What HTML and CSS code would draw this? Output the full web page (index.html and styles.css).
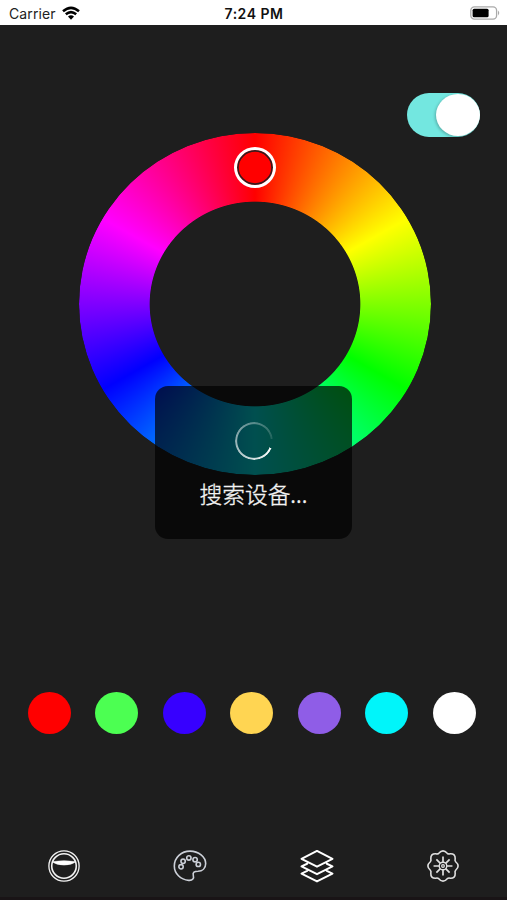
FILE: index.html
```html
<!DOCTYPE html>
<html lang="zh-CN">
<head>
<meta charset="utf-8">
<meta name="viewport" content="width=device-width, initial-scale=1">
<title>Light</title>
<link rel="stylesheet" href="styles.css">
</head>
<body>
<div class="app">
  <header class="status">
    <div class="carrier"><span>Carrier</span>
      <svg class="wifi" width="18" height="14" viewBox="0 0 18 14" fill="none" stroke="#000" stroke-width="2.5"><path d="M1 5.3Q9-1.6 17 5.3M3.8 8.3Q9 3.9 14.2 8.3"/><path d="M6 10.4Q9 8 12 10.4L9 13.7Z" fill="#000" stroke="none"/></svg>
    </div>
    <span class="time">7:24 PM</span>
    <svg class="battery" width="31" height="14" viewBox="0 0 31 14"><rect x=".8" y=".8" width="25.8" height="12.3" rx="3.6" fill="#fff" stroke="#aaa" stroke-width="1.3"/><rect x="2.6" y="2.7" width="16" height="8.6" rx="1.5"/><path d="M28 4.6Q30.5 7 28 9.4Z" fill="#aaa"/></svg>
  </header>
  <main class="main">
    <div class="toggle"><div class="knob"></div></div>
    <div class="wheel">
      <div class="disc"></div>
      <div class="picker"></div>
    </div>
    <div class="swatches">
      <span class="swatch red"></span><span class="swatch green"></span><span class="swatch blue"></span><span class="swatch yellow"></span><span class="swatch purple"></span><span class="swatch cyan"></span><span class="swatch white"></span>
    </div>
  </main>
  <nav class="tabs">
    <svg viewBox="0 0 36 36" fill="none" stroke="#f2f2f2"><circle cx="18" cy="18" r="16" stroke-width="1.4"/><circle cx="18" cy="18" r="13" stroke-width="1.7"/><path d="M5.5 13.4Q18 11.4 30.5 13.4Q26 17 18 17Q10 17 5.5 13.4Z" fill="#fff" stroke-width=".6"/></svg>
    <svg viewBox="0 0 36 36" fill="none" stroke="#ccd0d8" stroke-width="1.7"><path d="M16.5 33.2C8 32.5 1.4 26 1.4 18C1.4 9 9 2.2 18 2.2C27.2 2.2 34.6 8.2 34.6 15.4C34.6 20.7 31 23.5 26.5 23.6C22.7 23.6 20.5 24.7 21.5 28C22.4 31 21 33.6 16.5 33.2Z"/><circle cx="8.5" cy="18.8" r="2.3"/><circle cx="10.7" cy="13" r="2.3"/><circle cx="16.8" cy="9.5" r="2.3"/><circle cx="23.4" cy="11.3" r="2.3"/><circle cx="26.8" cy="16.3" r="2.3"/></svg>
    <svg viewBox="0 0 36 36" fill="none" stroke="#fff" stroke-width="2.1" stroke-linejoin="round" stroke-linecap="round"><path d="M18 2L34.4 10.4L18 18.7L1.6 10.4ZM7.6 15.6L1.6 18.5L18 26.7L34.4 18.5L28.4 15.6M7.6 23.2L1.6 26L18 34.4L34.4 26L28.4 23.2"/></svg>
    <svg viewBox="0 0 36 36" fill="none" stroke="#e0e0e0" stroke-width="1.4"><path stroke-width="1.7" stroke-linejoin="round" d="M13.5 4.6Q18-.6 22.5 4.6Q23.8 5.7 25.6 5.1Q31.2 4.8 30.9 10.4Q30.3 12.2 31.4 13.5Q36.6 18 31.4 22.5Q30.3 23.8 30.9 25.6Q31.2 31.2 25.6 30.9Q23.8 30.3 22.5 31.4Q18 36.6 13.5 31.4Q12.2 30.3 10.4 30.9Q4.8 31.2 5.1 25.6Q5.7 23.8 4.6 22.5Q-.6 18 4.6 13.5Q5.7 12.2 5.1 10.4Q4.8 4.8 10.4 5.1Q12.2 5.7 13.5 4.6Z"/><circle cx="18" cy="18" r="4"/><circle cx="18" cy="18" r="1.4"/><path stroke-width="1.8" d="M18 14V8M18 22V28M14 18H8M22 18H28M15.2 15.2L11 11M20.8 15.2L25 11M15.2 20.8L11 25M20.8 20.8L25 25"/></svg>
  </nav>
  <div class="hud">
    <div class="spinner"></div>
    <p class="message">搜索设备...</p>
  </div>
</div>
</body>
</html>
```

FILE: styles.css
```css
* { box-sizing: border-box; }
body { margin: 0; background: #1e1e1e; font-family: Inter, "Noto Sans CJK SC", sans-serif; }
.app { position: relative; width: 507px; height: 900px; display: flex; flex-direction: column; background: #1e1e1e; overflow: hidden; border-bottom: 3px solid #191416; }
.status { height: 25px; flex: none; background: #fff; color: #222; display: grid; grid-template-columns: 1fr auto 1fr; align-items: center; padding: 2px 6px 0 7px; font-size: 14px; line-height: 20px; }
.carrier { display: flex; align-items: center; gap: 6px; letter-spacing: .1px; padding-left: 2px; }
.wifi { margin-top: -2px; }
.time { font-weight: 600; color: #111; font-size: 14px; letter-spacing: .5px; }
.battery { justify-self: end; margin-top: -1px; }
.main { flex: 1; display: flex; flex-direction: column; }
.toggle { align-self: flex-end; flex: none; width: 73px; height: 44px; margin: 68px 27px 0 0; border-radius: 22px; background: #73e7e0; display: flex; justify-content: flex-end; align-items: center; }
.knob { width: 44px; height: 42px; margin-right: .5px; border-radius: 50%; background: #fff; box-shadow: -1px 1px 3px rgba(0,0,0,.25); }
.wheel { position: relative; flex: none; width: 352px; height: 342px; margin: -4px 0 0 79px; }
.disc { width: 352px; height: 352px; border-radius: 50%; transform: scaleY(.9716); transform-origin: top; background: conic-gradient(#f00, #ff0, #0f0, #0ff, #00f, #f0f, #f00); mask: radial-gradient(circle closest-side, transparent 59.6%, #000 60.1%); }
.picker { position: absolute; left: 155px; top: 14px; width: 42px; height: 41px; border: 3px solid #fff; border-radius: 50%; background: red; box-shadow: inset 0 0 0 1.8px #37191c; }
.swatches { display: flex; justify-content: space-between; margin: 217px 31.5px 0 27.5px; }
.swatch { width: 43px; height: 42px; border-radius: 50%; }
.red { background: #f00; }
.green { background: #4cff52; }
.blue { background: #3700ff; }
.yellow { background: #ffd552; }
.purple { background: #8f5de7; }
.cyan { background: #00f5fa; }
.white { background: #fff; }
.tabs { flex: none; display: grid; grid-template-columns: repeat(4, 126.4px); justify-content: center; justify-items: center; height: 48px; }
.tabs svg { width: 36px; height: 34px; }
.hud { position: absolute; left: 155px; top: 386px; width: 197px; height: 153px; border-radius: 13px; background: rgba(0,0,0,.69); display: flex; flex-direction: column; align-items: center; padding-top: 36px; }
.spinner { width: 38px; height: 38px; border-radius: 50%; background: conic-gradient(from 112deg, #fff, #ffffff20 92%, transparent 92%); mask: radial-gradient(circle closest-side, transparent 86%, #000 91%); }
.message { margin: 17px 0 0; color: #f4f4f4; font: 300 22.7px/34px "Noto Sans CJK SC", sans-serif; -webkit-text-stroke: .35px #f4f4f4; white-space: nowrap; }
```
